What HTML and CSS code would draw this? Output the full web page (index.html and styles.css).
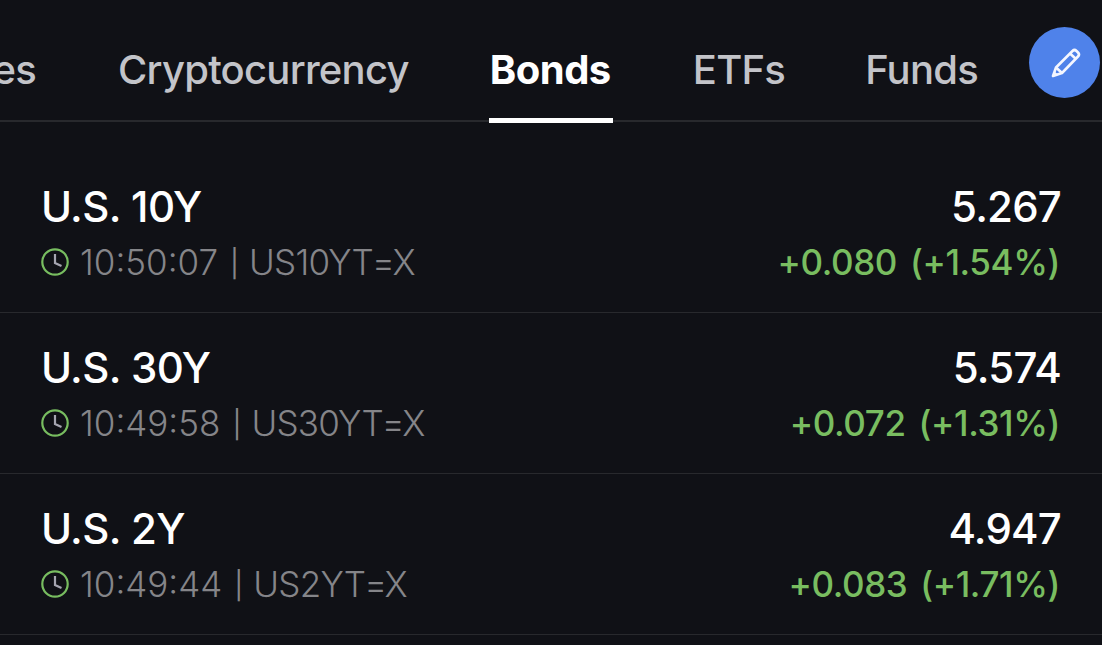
FILE: index.html
```
<!DOCTYPE html>
<html lang="en">
  <head>
    <meta charset="UTF-8" />
    <title>Markets - Bonds</title>
    <link rel="stylesheet" href="styles.css">
  </head>

  <body>
    <nav class="tabs">
      <a class="tab first">Indices</a>
      <a class="tab">Cryptocurrency</a>
      <a class="tab active">Bonds</a>
      <a class="tab">ETFs</a>
      <a class="tab">Funds</a>
      <button class="edit-button" aria-label="Edit">
        <svg width="34" height="34" viewBox="0 0 34 34" fill="none" stroke="#f4f6ff" stroke-width="2.6" stroke-linejoin="round">
          <path d="M5 30 L8 21.500 L24.500 5 Q26.500 3 28.500 5 L30 6.500 Q32 8.500 30 10.500 L14 27 Z" />
          <path d="M22 7.500 L28 13 M8 21.500 L14 27" />
          <path d="M5 30 L6.500 25.500 L10 28.500 Z" fill="#f4f6ff" stroke="none" />
        </svg>
      </button>
    </nav>

    <div class="list">
      <div class="row">
        <div class="info">
          <div class="name">U.S. 10Y</div>
          <div class="meta">
            <svg class="clock" viewBox="0 0 28 28"><circle cx="14" cy="14" r="12.700" /><path d="M14 6V15l6.500 3" /></svg>
            <span class="time">10:50:07</span>
            <span class="divider">|</span>
            <span class="symbol">US10YT=X</span>
          </div>
        </div>
        <div class="quote">
          <div class="price">5.267</div>
          <div class="change">+0.080 (+1.54%)</div>
        </div>
      </div>
      <div class="row">
        <div class="info">
          <div class="name">U.S. 30Y</div>
          <div class="meta">
            <svg class="clock" viewBox="0 0 28 28"><circle cx="14" cy="14" r="12.700" /><path d="M14 6V15l6.500 3" /></svg>
            <span class="time">10:49:58</span>
            <span class="divider">|</span>
            <span class="symbol">US30YT=X</span>
          </div>
        </div>
        <div class="quote">
          <div class="price">5.574</div>
          <div class="change">+0.072 (+1.31%)</div>
        </div>
      </div>
      <div class="row">
        <div class="info">
          <div class="name">U.S. 2Y</div>
          <div class="meta">
            <svg class="clock" viewBox="0 0 28 28"><circle cx="14" cy="14" r="12.700" /><path d="M14 6V15l6.500 3" /></svg>
            <span class="time">10:49:44</span>
            <span class="divider">|</span>
            <span class="symbol">US2YT=X</span>
          </div>
        </div>
        <div class="quote">
          <div class="price">4.947</div>
          <div class="change">+0.083 (+1.71%)</div>
        </div>
      </div>
    </div>
  </body>
</html>
```

FILE: styles.css
```
* {
  box-sizing: border-box;
}

body {
  margin: 0;
  height: 645px;
  overflow: hidden;
  background: #101116;
  color: #fff;
  font-family: Inter, sans-serif;
}

.tabs {
  position: relative;
  display: flex;
  justify-content: flex-end;
  gap: 80px;
  height: 122px;
  padding-right: 124px;
  border-bottom: 2px solid #28292d;
}

.tab {
  flex: none;
  height: 123px;
  padding-top: 45px;
  font-size: 40px;
  line-height: 50px;
  font-weight: 500;
  letter-spacing: -0.75px;
  color: #c3c4c9;
  white-space: nowrap;
}

.tab.first {
  margin-right: 2px;
}

.tab.active {
  color: #fff;
  font-weight: 700;
  letter-spacing: -0.5px;
  padding-left: 1px;
  padding-right: 2px;
  border-bottom: 5px solid #fff;
}

.edit-button {
  position: absolute;
  top: 27px;
  right: 2px;
  display: flex;
  align-items: center;
  justify-content: center;
  width: 71px;
  height: 71px;
  padding: 0;
  border: none;
  border-radius: 50%;
  background: #4f82ea;
}

.list {
  padding-top: 30px;
}

.row {
  display: flex;
  justify-content: space-between;
  height: 161px;
  padding: 30px 41px 0;
  border-bottom: 1px solid #28292d;
}

.name,
.price {
  height: 50px;
  font-size: 42px;
  line-height: 50px;
  font-weight: 500;
  letter-spacing: -0.6px;
}

.price {
  letter-spacing: -0.8px;
}

.meta,
.change {
  height: 46px;
  margin-top: 7px;
  font-size: 35px;
  line-height: 46px;
  white-space: nowrap;
}

.meta {
  display: flex;
  align-items: center;
  color: #858589;
  font-weight: 300;
}

.clock {
  width: 28px;
  height: 28px;
  margin-right: 11px;
  fill: none;
  stroke: #78bd60;
  stroke-width: 2.2;
}

.clock path {
  stroke: #a5a5b0;
}

.divider {
  margin: 4px 10px 0 12px;
  font-size: 27px;
  font-weight: 400;
}

.symbol {
  letter-spacing: -0.7px;
}

.quote {
  text-align: right;
}

.change {
  padding-right: 1px;
  color: #79bd60;
  font-weight: 500;
  letter-spacing: -0.4px;
  word-spacing: 4px;
}
```
